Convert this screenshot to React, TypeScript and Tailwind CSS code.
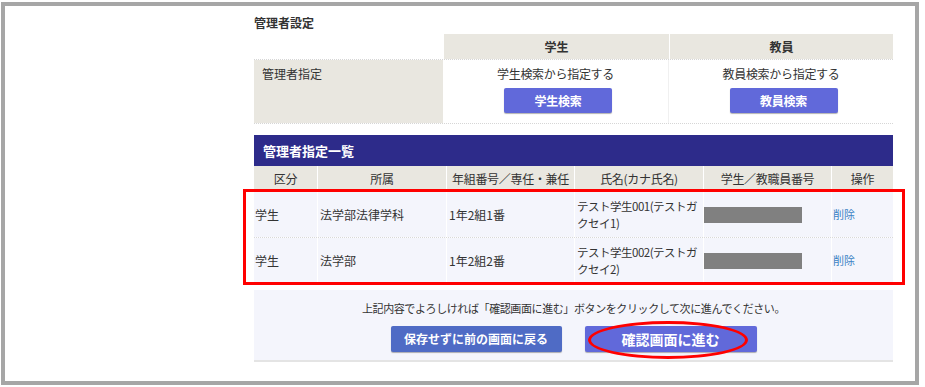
import React from 'react';

// ─── Data ─────────────────────────────────────────────────────────────────────

interface Assignee {
  kind: string;
  dept: string;
  classNo: string;
  name: string;
  kana: string;
}

const rows: Assignee[] = [
  { kind: '学生', dept: '法学部法律学科', classNo: '1年2組1番', name: 'テスト学生001(テストガ', kana: 'クセイ1)' },
  { kind: '学生', dept: '法学部', classNo: '1年2組2番', name: 'テスト学生002(テストガ', kana: 'クセイ2)' },
];

const cols = 'grid grid-cols-[63px_128px_127px_128px_127px_61px] gap-x-px';

// ─── Page ─────────────────────────────────────────────────────────────────────

export default function App() {
  return (
    <div className="w-[925px] h-[387px] bg-white pt-[2px] pl-px text-[12px] text-[#333] font-['Noto_Sans_CJK_JP',sans-serif]">
      <div className="w-[918px] h-[383px] border-4 border-[#a6a6a6] bg-white">
        <div className="ml-[249px] w-[639px] pt-[7px]">

          {/* Settings */}
          <p className="font-bold leading-[20px]">管理者設定</p>
          <div className="grid grid-cols-[189px_225px_223px] gap-x-px mt-[1px]">
            <div />
            <div className="bg-[#e9e7e0] h-[25px] flex items-center justify-center font-bold">学生</div>
            <div className="bg-[#e9e7e0] h-[25px] flex items-center justify-center font-bold">教員</div>
          </div>
          <div className="grid grid-cols-[189px_226px_224px] border-y border-dotted border-[#d6d6d6] h-[65px]">
            <div className="bg-[#e9e7e0] px-2 pt-[5px]">管理者指定</div>
            <div className="flex flex-col items-center pt-[5px] border-r border-[#f0f0f0] tracking-[-0.3px]">
              <span>学生検索から指定する</span>
              <button className="mt-[5px] ml-[5px] w-[108px] h-[25px] bg-[#6169da] text-white font-bold rounded-[2px] shadow-[0_1px_1px_rgba(0,0,0,0.3)]">学生検索</button>
            </div>
            <div className="flex flex-col items-center pt-[5px] tracking-[-0.3px]">
              <span>教員検索から指定する</span>
              <button className="mt-[5px] ml-[5px] w-[108px] h-[25px] bg-[#6169da] text-white font-bold rounded-[2px] shadow-[0_1px_1px_rgba(0,0,0,0.3)]">教員検索</button>
            </div>
          </div>

          {/* List */}
          <div className="relative mt-[11px]">
            <div className="h-[31px] bg-[#2d2b8a] text-white font-bold text-[13px] flex items-center px-[9px]">管理者指定一覧</div>
            <div className={`${cols} h-[25px] bg-white`}>
              {['区分', '所属', '年組番号／専任・兼任', '氏名(カナ氏名)', '学生／教職員番号', '操作'].map((h) => (
                <div key={h} className="bg-[#e9e7e0] flex items-center justify-center tracking-[-0.3px]">{h}</div>
              ))}
            </div>
            {rows.map((r, i) => (
              <div key={i} className={`${cols} h-[46px] bg-white border-t border-dotted border-[#d8d8d8]`}>
                <div className="bg-[#f4f5fc] flex items-center px-[1px]">{r.kind}</div>
                <div className="bg-[#f4f5fc] flex items-center px-[2px]">{r.dept}</div>
                <div className="bg-[#f4f5fc] flex items-center px-[2px]">{r.classNo}</div>
                <div className="bg-[#f4f5fc] flex flex-col justify-center px-[2px] leading-[17px] text-[11.5px] tracking-[-0.5px] whitespace-nowrap overflow-hidden">
                  <span>{r.name}</span>
                  <span>{r.kana}</span>
                </div>
                <div className="bg-[#f4f5fc] flex items-center">
                  <div className="w-[98px] h-[16px] bg-[#808080]" />
                </div>
                <div className="bg-[#f4f5fc] flex items-center px-[1px] text-[11px]">
                  <a className="text-[#3a82c4]">削除</a>
                </div>
              </div>
            ))}
            <div className="absolute left-[-11px] top-[54px] w-[662px] h-[96px] border-[3px] border-[#ff0000]" />
          </div>

          {/* Footer */}
          <div className="relative mt-[7px] h-[72px] bg-[#f4f5fc] border-b-2 border-[#e4e4e4] flex flex-col items-center pt-[10px]">
            <p className="leading-[16px] text-[11px] tracking-[-0.4px]">上記内容でよろしければ「確認画面に進む」ボタンをクリックして次に進んでください。</p>
            <div className="flex gap-[23px] mt-[10px]">
              <button className="w-[171px] h-[26px] bg-[#4f6bc5] text-white font-bold text-[12px] rounded-[2px] shadow-[0_1px_1px_rgba(0,0,0,0.3)]">保存せずに前の画面に戻る</button>
              <button className="w-[172px] h-[26px] bg-[#6169da] text-white font-bold text-[14px] rounded-[2px] shadow-[0_1px_1px_rgba(0,0,0,0.3)]">確認画面に進む</button>
            </div>
            <div className="absolute left-[334px] top-[31px] w-[160px] h-[38px] rounded-[50%] border-[3px] border-[#ff0000]" />
          </div>

        </div>
      </div>
    </div>
  );
}
